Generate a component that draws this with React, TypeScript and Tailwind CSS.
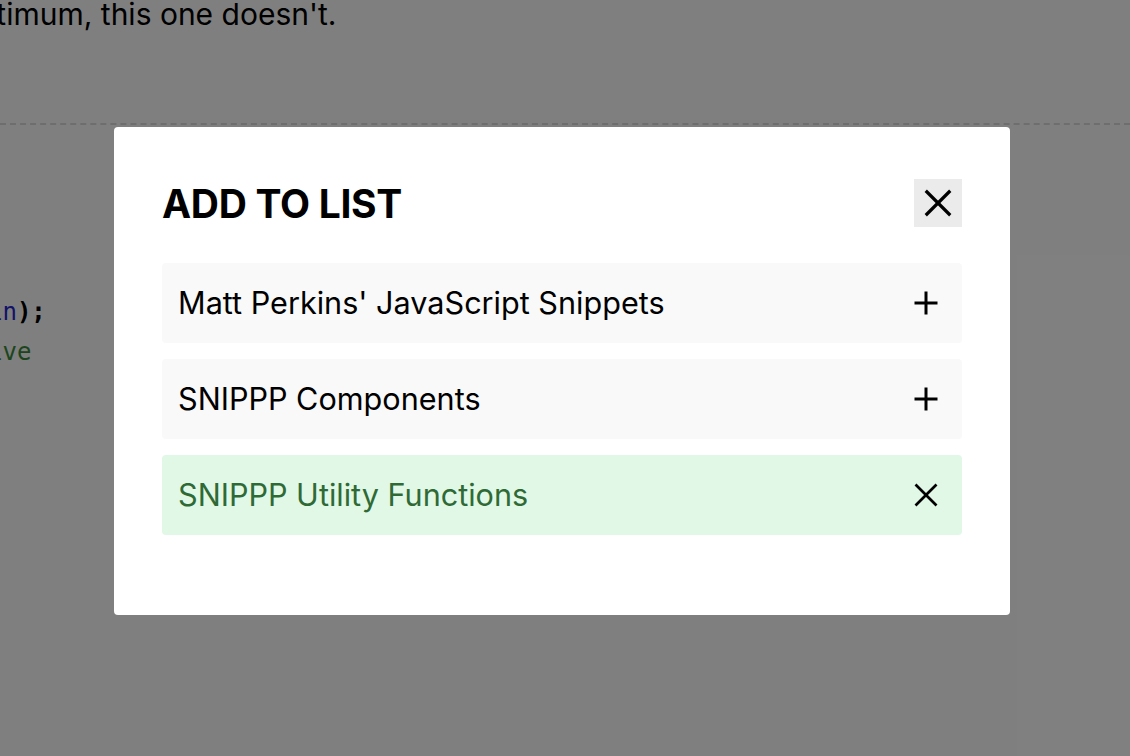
import React from "react";

const font = { fontFamily: "Inter, 'Noto Sans', sans-serif" };

function PlusIcon() {
  return (
    <svg width="24" height="24" viewBox="0 0 24 24" fill="none" stroke="#000" strokeWidth="3">
      <line x1="12" y1="0.5" x2="12" y2="23.5" />
      <line x1="0.5" y1="12" x2="23.5" y2="12" />
    </svg>
  );
}

function XIcon({ size = 24, sw = 2.6 }: { size?: number; sw?: number }) {
  return (
    <svg width={size} height={size} viewBox="0 0 24 24" fill="none" stroke="#000" strokeWidth={sw}>
      <line x1="1.5" y1="1.5" x2="22.5" y2="22.5" />
      <line x1="22.5" y1="1.5" x2="1.5" y2="22.5" />
    </svg>
  );
}

export default function App() {
  const items = [
    { name: "Matt Perkins' JavaScript Snippets", added: false },
    { name: "SNIPPP Components", added: false },
    { name: "SNIPPP Utility Functions", added: true },
  ];
  return (
    <div className="relative w-[1130px] h-[756px] overflow-hidden bg-white" style={font}>
      {/* underlying page */}
      <div className="flex flex-col">
        <p className="whitespace-nowrap text-[30px] leading-[34px] text-black -ml-[40px] -mt-[3px]">optimum, this one doesn't.</p>
        <div className="mt-[92px] border-t-2 border-dashed border-[#dcdcdc]" />
        <div
          className="mt-[167px] flex flex-col text-[24px] leading-[40px] -ml-[12px]"
          style={{ fontFamily: "'DejaVu Sans Mono', 'Liberation Mono', monospace" }}
        >
          <span>
            <span className="text-[#2525d0]">in</span>
            <span className="text-black font-bold">);</span>
          </span>
          <span className="text-[#3b8a3b]">ive</span>
        </div>
      </div>

      {/* overlay */}
      <div className="absolute inset-0 bg-black/50">
        <div className="absolute left-[114px] top-[127px] w-[896px] rounded-[4px] bg-white px-12 pt-12 pb-20">
          <div className="flex h-14 items-center justify-between">
            <h2 className="text-[39px] font-bold leading-none text-black tracking-[-0.3px]">ADD TO LIST</h2>
            <button className="flex h-12 w-12 items-center justify-center bg-[#ebebeb]">
              <XIcon size={28} sw={2.8} />
            </button>
          </div>
          <div className="mt-8 flex flex-col gap-4">
            {items.map((it) => (
              <div
                key={it.name}
                className={`flex h-20 items-center justify-between rounded-[4px] pl-4 pr-6 ${
                  it.added ? "bg-[#e1f8e6] text-[#2f6a36]" : "bg-[#f9f9f9] text-black"
                }`}
              >
                <span className="text-[30.6px] leading-none">{it.name}</span>
                {it.added ? <XIcon /> : <PlusIcon />}
              </div>
            ))}
          </div>
        </div>
      </div>
    </div>
  );
}
